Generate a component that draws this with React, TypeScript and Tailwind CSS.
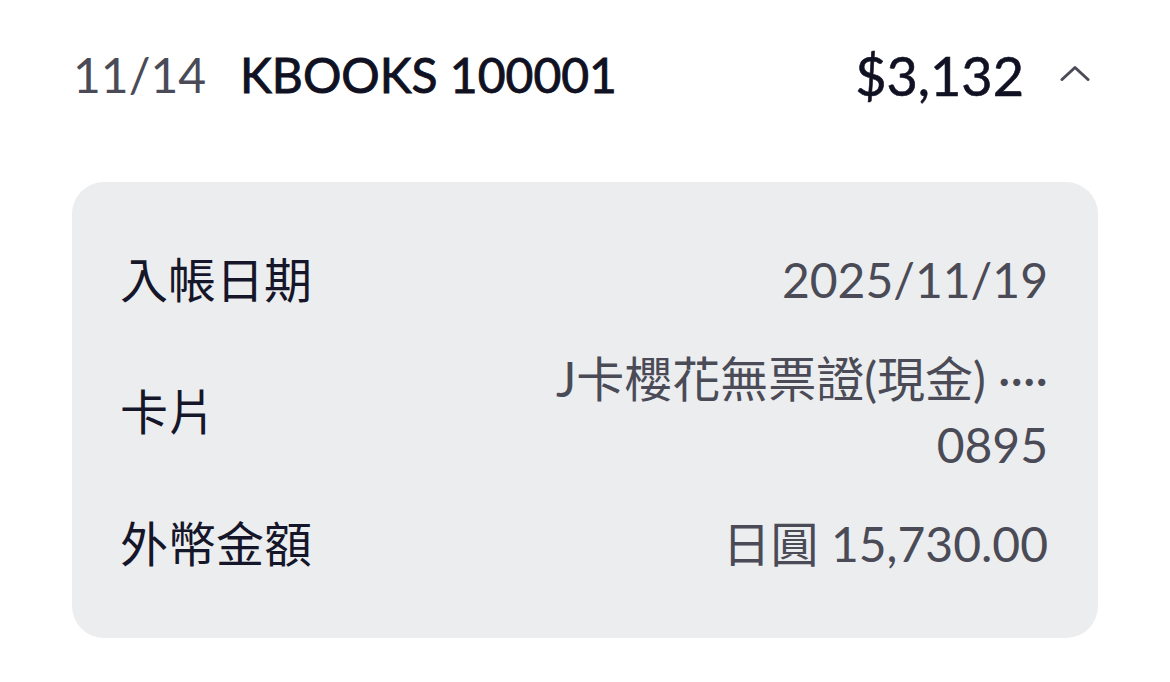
const FONT = "font-['Lato','Noto_Sans_CJK_TC',sans-serif]";

function ChevronUp() {
  return (
    <svg width="30" height="16" viewBox="0 0 30 16" fill="none" className="text-[#4b4c58]">
      <path d="M2 14.5 L15 2.5 L28 14.5" stroke="currentColor" strokeWidth="3" strokeLinecap="round" strokeLinejoin="round" />
    </svg>
  );
}

function DetailRow({ label, children }: { label: string; children: React.ReactNode }) {
  return (
    <div className="flex items-center justify-between">
      <span className="text-[48px] leading-[66px] text-[#15162a]">{label}</span>
      <span className="text-right text-[48px] leading-[66px] text-[#4a4b57]">{children}</span>
    </div>
  );
}

export default function App() {
  return (
    <div className={`${FONT} min-h-screen bg-white px-[72px]`}>
      {/* 交易標題列 */}
      <div className="flex h-[150px] items-center">
        <span className="ml-[1px] text-[48px] text-[#4a4b57]">11/14</span>
        <span className="ml-[34px] text-[48px] text-[#101122] [-webkit-text-stroke:0.9px_#101122]">
          KBOOKS 100001
        </span>
        <span className="ml-auto text-[54px] text-[#101122] [-webkit-text-stroke:0.6px_#101122]">$3,132</span>
        <span className="ml-[36px] mr-[8px] mb-[4px]">
          <ChevronUp />
        </span>
      </div>

      {/* 明細卡片 */}
      <div className="mt-[32px] flex flex-col gap-[33px] rounded-[32px] bg-[#ecedee] pb-[61px] pl-[48px] pr-[50px] pt-[65px]">
        <DetailRow label="入帳日期">2025/11/19</DetailRow>
        <DetailRow label="卡片">
          J卡櫻花無票證(現金) ····
          <br />
          0895
        </DetailRow>
        <DetailRow label="外幣金額">日圓 15,730.00</DetailRow>
      </div>
    </div>
  );
}
